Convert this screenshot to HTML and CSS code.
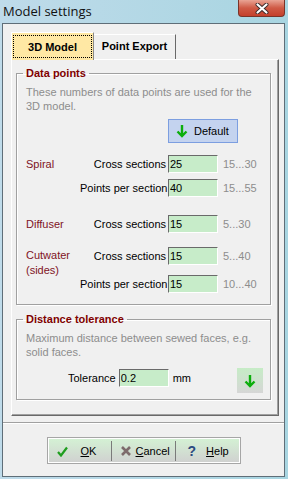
FILE: index.html
```html
<!DOCTYPE html>
<html lang="en">
<head>
  <meta charset="UTF-8" />
  <meta name="viewport" content="width=device-width, initial-scale=1.0" />
  <title>Model settings</title>
  <link rel="stylesheet" href="styles.css">
</head>
<body>
  <div class="window">
    <div class="titlebar">
      <span class="title">Model settings</span>
      <div class="close-btn">
        <svg width="14" height="11" viewBox="0 0 14 11">
          <path d="M2.5 1.5l9 8M11.5 1.5l-9 8" stroke="#3a2a2a" stroke-width="4" stroke-linecap="round"/>
          <path d="M2.5 1.5l9 8M11.5 1.5l-9 8" stroke="#fff" stroke-width="2.2" stroke-linecap="round"/>
        </svg>
      </div>
    </div>

    <div class="client">
      <div class="client-top">
        <div class="tabs">
          <div class="tab active"><span class="focus">3D Model</span></div>
          <div class="tab">Point Export</div>
        </div>

        <div class="panel">
          <fieldset class="group group-points">
            <legend>Data points</legend>
            <p class="hint">These numbers of data points are used for the 3D model.</p>
            <div class="default-row">
              <button class="default-btn">
                <svg width="12" height="14" viewBox="0 0 12 14"><path d="M6 1v11.5M1.5 7.5L6 12l4.5-4.5" stroke="#0cae0c" stroke-width="2.4" fill="none"/></svg>
                Default
              </button>
            </div>

            <div class="row r1">
              <span class="cat">Spiral</span>
              <span class="sub">Cross sections</span>
              <input class="num" type="text" value="25">
              <span class="range">15...30</span>
            </div>
            <div class="row r2">
              <span class="cat"></span>
              <span class="sub pps">Points per section</span>
              <input class="num" type="text" value="40">
              <span class="range">15...55</span>
            </div>
            <div class="row r3">
              <span class="cat">Diffuser</span>
              <span class="sub">Cross sections</span>
              <input class="num" type="text" value="15">
              <span class="range">5...30</span>
            </div>
            <div class="row r4">
              <span class="cat two">Cutwater (sides)</span>
              <span class="sub">Cross sections</span>
              <input class="num" type="text" value="15">
              <span class="range">5...40</span>
            </div>
            <div class="row r5">
              <span class="cat"></span>
              <span class="sub pps">Points per section</span>
              <input class="num" type="text" value="15">
              <span class="range">10...40</span>
            </div>
          </fieldset>

          <fieldset class="group group-tol">
            <legend>Distance tolerance</legend>
            <p class="hint">Maximum distance between sewed faces, e.g. solid faces.</p>
            <div class="tol-row">
              <span class="tol-label">Tolerance</span>
              <input class="num" type="text" value="0.2">
              <span class="unit">mm</span>
              <button class="arrow-btn">
                <svg width="12" height="14" viewBox="0 0 12 14"><path d="M6 1v11.5M1.5 7.5L6 12l4.5-4.5" stroke="#0cae0c" stroke-width="2.4" fill="none"/></svg>
              </button>
            </div>
          </fieldset>
        </div>
      </div>

      <div class="sep"></div>

      <div class="footer">
        <div class="btn-bar">
          <div class="seg seg-ok">
            <svg width="11" height="11" viewBox="0 0 11 11"><path d="M1 6l3 3.5L10 1.5" stroke="#1e9e1e" stroke-width="2.2" fill="none"/></svg>
            <span><u>O</u>K</span>
          </div>
          <div class="seg seg-cancel">
            <svg width="10" height="10" viewBox="0 0 10 10"><path d="M1 1l8 8M9 1l-8 8" stroke="#7d6b6b" stroke-width="2.6"/></svg>
            <span><u>C</u>ancel</span>
          </div>
          <div class="seg seg-help">
            <span class="q">?</span>
            <span><u>H</u>elp</span>
          </div>
        </div>
      </div>
    </div>
  </div>
</body>
</html>
```

FILE: styles.css
```css
* {
  box-sizing: border-box;
}
body {
  margin: 0;
  font-family: "Liberation Sans", Arial, sans-serif;
  font-size: 11px;
  color: #000;
}
.window {
  width: 288px;
  height: 479px;
  padding: 0 3px 2px 2px;
  background: linear-gradient(to right, #bfdbea, #a8d5e1);
  display: flex;
  flex-direction: column;
}
.titlebar {
  height: 23px;
  display: flex;
  align-items: flex-start;
}
.title {
  font-family: "Open Sans", sans-serif;
  font-size: 13px;
  padding: 2px 0 0 1px;
  color: #111;
}
.close-btn {
  margin-left: auto;
  width: 47px;
  height: 17px;
  border: 1px solid #7a3328;
  border-top: none;
  border-radius: 0 0 4px 4px;
  background: linear-gradient(#e9a494, #cf5a45 50%, #c4402c);
  display: flex;
  align-items: center;
  justify-content: center;
}
.client {
  flex: 1;
  border: 1px solid #5f6e78;
  background: #f0f0f0;
  display: flex;
  flex-direction: column;
}
.client-top {
  padding: 8px 0 0 8px;
}
.tabs {
  display: flex;
  align-items: flex-end;
  margin-bottom: -1px;
}
.tab {
  font-weight: bold;
  display: flex;
  align-items: center;
  justify-content: center;
}
.tab.active {
  position: relative;
  width: 83px;
  height: 28px;
  padding: 2px 1px 2px 1px;
  background: #ffe8a4;
  border-top: 1px solid #fff;
  border-left: 1px solid #fff;
  border-right: 1px solid #8a8a8a;
}
.focus {
  width: 100%;
  height: 100%;
  border: 1px dotted #000;
  display: flex;
  align-items: center;
  justify-content: center;
}
.tab:not(.active) {
  width: 82px;
  height: 25px;
  margin-bottom: 1px;
  border-top: 1px solid #fff;
  border-right: 1px solid #696969;
  padding-bottom: 2px;
}
.panel {
  width: 268px;
  height: 357px;
  border-top: 1px solid #fff;
  border-left: 1px solid #fff;
  border-right: 1px solid #696969;
  border-bottom: 1px solid #696969;
  box-shadow: inset -1px -1px 0 #a0a0a0;
  padding-left: 4px;
}
.group {
  width: 255px;
  min-width: 0;
  margin: 7px 0 0 0;
  padding: 0 7px 0 9px;
  border: 1px solid #a0a0a0;
  box-shadow: 1px 1px 0 #fff, inset 1px 1px 0 #fff;
}
.group legend {
  margin-left: -3px;
  padding: 0 3px;
  line-height: 13px;
  font-weight: bold;
  color: #800000;
}
.group-points {
  padding-bottom: 11px;
}
.group-tol {
  margin-top: 8px;
  padding-bottom: 6px;
}
.hint {
  margin: 5px 0 0;
  line-height: 14px;
  color: #8d8d8d;
}
.default-row {
  display: flex;
  padding-left: 142px;
  margin-top: 6px;
}
.default-btn {
  width: 70px;
  height: 24px;
  padding: 0 0 0 7px;
  display: flex;
  align-items: center;
  gap: 6px;
  border: 1px solid #7c9ee0;
  background: #c4d3ef;
  font-family: inherit;
  font-size: 11px;
  color: #000;
}
.row {
  display: grid;
  grid-template-columns: 54px 88px 50px 1fr;
  grid-template-rows: 18px;
  height: 18px;
  align-items: center;
}
.r1 { margin-top: 12px; }
.r2 { margin-top: 6px; }
.r3 { margin-top: 18px; }
.r4 { margin-top: 14px; }
.r5 { margin-top: 10px; }
.cat {
  color: #7f1325;
}
.cat.two {
  align-self: start;
  padding-top: 1px;
  line-height: 15px;
}
.sub {
  text-align: right;
  padding-right: 2px;
  white-space: nowrap;
}
.sub.pps {
  padding-right: 6px;
}
.num {
  width: 50px;
  height: 18px;
  padding: 0 0 0 1px;
  border: 1px solid;
  border-color: #6a6a6a #fff #fff #6a6a6a;
  background: #c7ecc9;
  font-family: inherit;
  font-size: 11px;
  color: #000;
}
.range {
  padding-left: 5px;
  color: #8d8d8d;
}
.tol-row {
  display: flex;
  align-items: flex-start;
  height: 25px;
  margin-top: 9px;
  padding-left: 42px;
}
.tol-label {
  line-height: 18px;
  margin-top: 1px;
  margin-right: 3px;
}
.tol-row .num {
  margin-top: 1px;
}
.unit {
  line-height: 18px;
  margin: 1px 0 0 4px;
}
.arrow-btn {
  margin-left: auto;
  width: 26px;
  height: 25px;
  padding: 0;
  border: none;
  background: linear-gradient(#c6ecc6, #d6d6d6);
  display: flex;
  align-items: center;
  justify-content: center;
}
.sep {
  margin-top: 6px;
  height: 2px;
  border-top: 1px solid #a0a0a0;
  border-bottom: 1px solid #fff;
}
.footer {
  display: flex;
  justify-content: center;
  margin-top: 13px;
}
.btn-bar {
  width: 194px;
  height: 27px;
  display: flex;
  border: 1px solid #a6a6a6;
  box-shadow: inset 0 0 0 1px #fff;
  background: linear-gradient(#d4f2d4, #d0d0d0);
}
.seg {
  display: flex;
  align-items: center;
  height: 20px;
  margin-top: 3px;
}
.seg-ok {
  width: 64px;
  padding-left: 9px;
  gap: 13px;
  border-right: 1px solid #7a7a7a;
}
.seg-cancel {
  width: 64px;
  padding-left: 9px;
  gap: 5px;
  border-right: 1px solid #7a7a7a;
}
.seg-help {
  width: 64px;
  padding-left: 12px;
  gap: 10px;
}
.q {
  font-size: 14px;
  font-weight: bold;
  color: #2b4a80;
}
```
